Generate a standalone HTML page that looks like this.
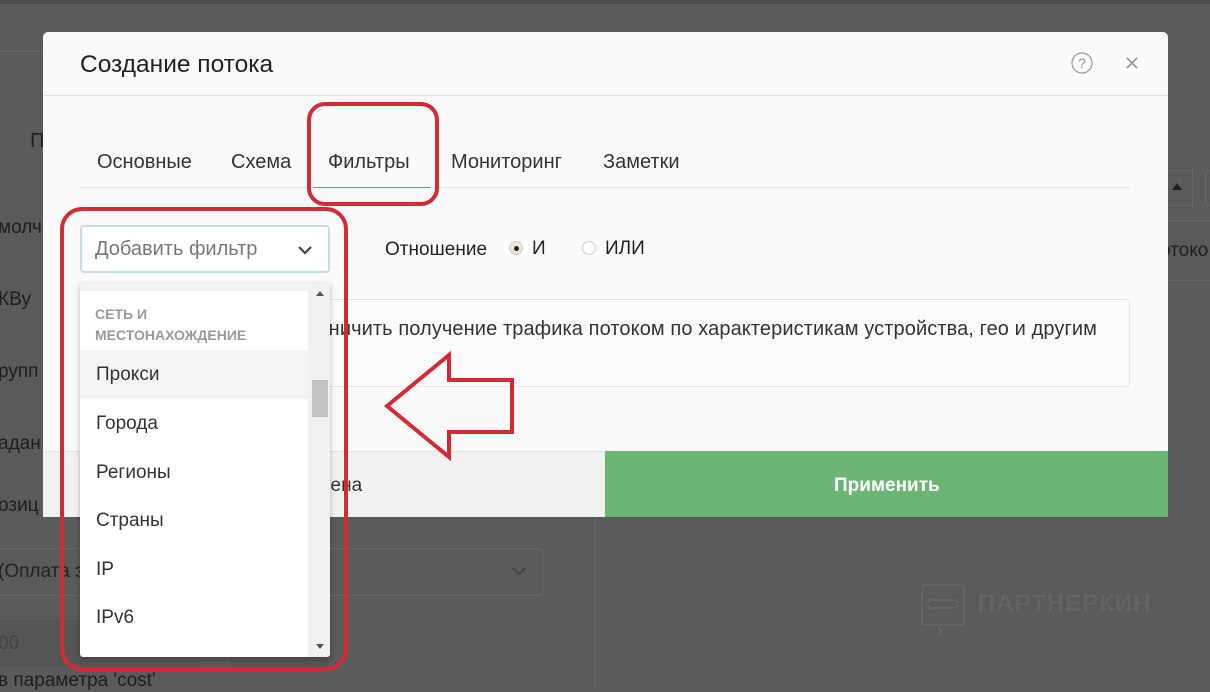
<!DOCTYPE html>
<html><head><meta charset="utf-8"><style>
*{margin:0;padding:0;box-sizing:border-box}
body{width:1210px;height:687px;overflow:hidden;background:#5a5a5a;font-family:"Liberation Sans","DejaVu Sans",sans-serif;position:relative}
.a{position:absolute;white-space:nowrap}
.bg{color:#1e1e1e;font-size:19px}
.m{position:absolute;left:43px;top:32px;width:1125px;height:485px;background:#fafafa;border-radius:5px 5px 0 0;overflow:hidden}
.tab{position:absolute;top:119px;font-size:20px;color:#333}
.dd{position:absolute;left:80px;top:283px;width:250px;height:374px;background:#fff;border-radius:3px;box-shadow:0 2px 6px rgba(0,0,0,.25);overflow:hidden}
.it{position:absolute;left:16px;font-size:19px;color:#333}
</style></head><body>
<div style="position:absolute;left:0;top:0;width:1210px;height:4px;background:#4e4e4e"></div>
<div style="position:absolute;left:0;top:51px;width:43px;height:1px;background:#666"></div>
<div class="a bg" style="left:30px;top:130px;font-size:20px">П</div>
<div class="a bg" style="left:-2px;top:217px">молч</div>
<div class="a bg" style="left:-2px;top:289px">КВу</div>
<div class="a bg" style="left:-2px;top:361px">рупп</div>
<div class="a bg" style="left:-2px;top:433px">адан</div>
<div class="a bg" style="left:-2px;top:495px">озиц</div>
<div style="position:absolute;left:-5px;top:548px;width:548px;height:48px;border:1px solid #666;border-radius:4px"></div>
<div class="a bg" style="left:-2px;top:561px;color:#222">(Оплата з</div>
<svg class="a" style="left:510px;top:564px" width="18" height="14"><path d="M3 4l6 6 6-6" stroke="#444" stroke-width="2" fill="none"/></svg>
<div style="position:absolute;left:0;top:620px;width:200px;height:46px;background:#555"></div>
<div style="position:absolute;left:230px;top:620px;width:100px;height:46px;background:#555"></div>
<div class="a bg" style="left:-2px;top:633px;color:#444">00</div>
<div class="a bg" style="left:-2px;top:670px">в параметра 'cost'</div>
<div style="position:absolute;left:595px;top:517px;width:1px;height:170px;background:#666"></div>
<div style="position:absolute;left:1168px;top:170px;width:25px;height:36px;border:1px solid #666;border-left:none"></div>
<div style="position:absolute;left:1172px;top:183px;border:5px solid transparent;border-bottom:7px solid #222;border-top:none"></div>
<div style="position:absolute;left:1205px;top:170px;width:10px;height:36px;border:1px solid #666;border-radius:3px"></div>
<div style="position:absolute;left:1168px;top:220px;width:42px;height:1px;background:#666"></div>
<div style="position:absolute;left:1168px;top:280px;width:42px;height:1px;background:#666"></div>
<div class="a bg" style="left:1160px;top:240px">отоко</div>
<svg class="a" style="left:920px;top:583px" width="48" height="52"><rect x="2" y="2" width="42" height="40" rx="3" fill="none" stroke="#646464" stroke-width="2"/><path d="M18 42l3 8 4-8" fill="none" stroke="#646464" stroke-width="2"/><rect x="8" y="17" width="30" height="8" rx="4" fill="none" stroke="#646464" stroke-width="2"/></svg>
<div class="a" style="left:978px;top:590px;font-size:24px;font-weight:bold;color:#646464;letter-spacing:1px">ПАРТНЕРКИН</div>

<div class="m">
 <div class="a" style="left:37px;top:19px;font-size:24.5px;color:#222">Создание потока</div>
 <svg class="a" style="left:1027px;top:20px" width="24" height="24"><circle cx="12" cy="11" r="10" fill="none" stroke="#999" stroke-width="1.2"/><text x="12" y="16" text-anchor="middle" font-size="14" fill="#999" font-family="Liberation Sans">?</text></svg>
 <svg class="a" style="left:1082px;top:24px" width="14" height="14"><path d="M2 2l10 10M12 2L2 12" stroke="#999" stroke-width="1.8"/></svg>
 <div style="position:absolute;left:0;top:63px;width:1125px;height:1px;background:#e2e2e2"></div>
 <div class="tab" style="left:54px">Основные</div>
 <div class="tab" style="left:188px">Схема</div>
 <div class="tab" style="left:285px">Фильтры</div>
 <div class="tab" style="left:408px">Мониторинг</div>
 <div class="tab" style="left:560px">Заметки</div>
 <div style="position:absolute;left:37px;top:155px;width:1050px;height:1px;background:#e6e6e6"></div>
 <div style="position:absolute;left:270px;top:155px;width:117px;height:1px;background:#5aa862"></div>
 <div style="position:absolute;left:37px;top:193px;width:250px;height:48px;border:2px solid #c9d9e8;border-radius:4px;background:#fff"></div>
 <div class="a" style="left:52px;top:206px;font-size:20px;color:#777">Добавить фильтр</div>
 <svg class="a" style="left:253px;top:211px" width="18" height="14"><path d="M3 4l6 6 6-6" stroke="#444" stroke-width="2.2" fill="none"/></svg>
 <div class="a" style="left:342px;top:207px;font-size:19px;color:#222">Отношение</div>
 <div style="position:absolute;left:466px;top:209px;width:14px;height:14px;border-radius:50%;background:#f3e7cf;border:1px solid #ccc"></div>
 <div style="position:absolute;left:471px;top:214px;width:5px;height:5px;border-radius:50%;background:#222"></div>
 <div class="a" style="left:489px;top:206px;font-size:19px;color:#222">И</div>
 <div style="position:absolute;left:539px;top:209px;width:14px;height:14px;border-radius:50%;background:#fff;border:1px solid #ccc"></div>
 <div class="a" style="left:562px;top:206px;font-size:19px;color:#222">ИЛИ</div>
 <div style="position:absolute;left:37px;top:267px;width:1050px;height:88px;border:1px solid #e6e6e6;border-radius:4px;background:#fbfbfb"></div>
 <div class="a" style="right:71px;top:286px;font-size:20px;letter-spacing:0.1px;color:#333">Вы можете ограничить получение трафика потоком по характеристикам устройства, гео и другим</div>
 <div style="position:absolute;left:0;top:419px;width:562px;height:66px;background:#f1f1f1;border-top:1px solid #e2e2e2"></div>
 <div class="a" style="left:251px;top:443px;font-size:19px;color:#333">Отмена</div>
 <div style="position:absolute;left:562px;top:419px;width:563px;height:66px;background:#6db574"></div>
 <div class="a" style="left:791px;top:443px;font-size:19px;color:#fff;font-weight:bold">Применить</div>
</div>

<div class="dd">
 <div style="position:absolute;left:0;top:0;width:250px;height:8px;background:#f2f2f2"></div>
 <div style="position:absolute;left:228px;top:0;width:22px;height:374px;background:#f1f1f1"></div>
 <div style="position:absolute;left:232px;top:97px;width:16px;height:37px;background:#c1c1c1"></div>
 <div style="position:absolute;left:236px;top:8px;border:4px solid transparent;border-bottom:5px solid #555;border-top:none"></div>
 <div style="position:absolute;left:236px;top:361px;border:4px solid transparent;border-top:5px solid #555;border-bottom:none"></div>
 <div class="a" style="left:15px;top:21px;font-size:14px;font-weight:bold;color:#999;line-height:21px">СЕТЬ И<br>МЕСТОНАХОЖДЕНИЕ</div>
 <div style="position:absolute;left:0;top:67px;width:228px;height:49px;background:#f4f4f4"></div>
 <div class="it" style="top:81px">Прокси</div>
 <div class="it" style="top:130px">Города</div>
 <div class="it" style="top:179px">Регионы</div>
 <div class="it" style="top:227px">Страны</div>
 <div class="it" style="top:276px">IP</div>
 <div class="it" style="top:324px">IPv6</div>
</div>

<svg class="a" style="left:0;top:0" width="1210" height="687">
 <rect x="309" y="104" width="128" height="100" rx="16" fill="none" stroke="#d42a35" stroke-width="4"/>
 <rect x="62" y="209" width="284" height="460" rx="20" fill="none" stroke="#d42a35" stroke-width="4"/>
 <path d="M387 406L449 355V380H512V432H449V457Z" fill="none" stroke="#d42a35" stroke-width="4" stroke-linejoin="miter"/>
</svg>
</body></html>
